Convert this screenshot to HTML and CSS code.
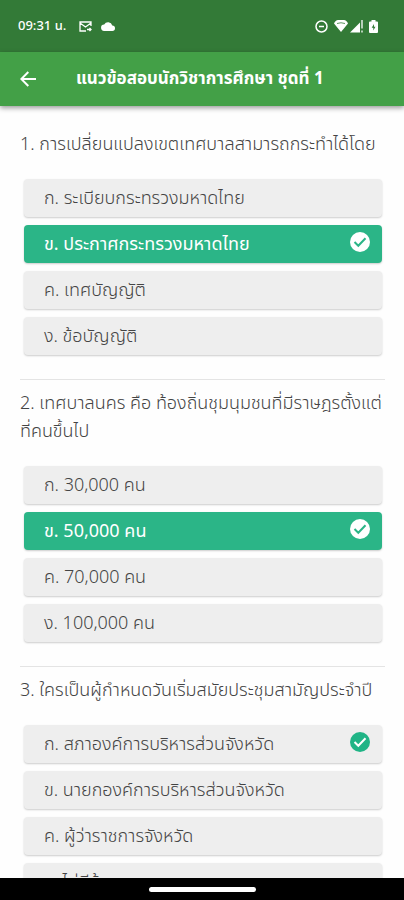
FILE: index.html
```
<!DOCTYPE html>
<html lang="th">
<head>
    <meta charset="utf-8">
    <meta name="viewport" content="width=device-width, initial-scale=1">
    <title>แนวข้อสอบนักวิชาการศึกษา ชุดที่ 1</title>
    <link rel="stylesheet" href="styles.css">
</head>
<body>
    <div class="status-bar">
        <span class="time">09:31 น.</span>
        <svg class="icon-mail" width="13" height="11" viewBox="0 0 13 11">
            <path d="M7 10H1V1h11v4M1 2l5.500 4L12 2M8 8.500h4M10.500 7l1.500 1.500L10.500 10" fill="none" stroke="#fff" stroke-width="1.300"/>
        </svg>
        <svg class="icon-cloud" width="14" height="9" viewBox="0 0 14 9">
            <path d="M11.300 3.500A4.400 4.400 0 0 0 3.200 2.600 3.200 3.200 0 0 0 3.300 9h7.900a2.750 2.750 0 0 0 .1-5.500z" fill="#fff"/>
        </svg>
        <div class="status-right">
            <svg class="icon-dnd" width="13" height="13" viewBox="0 0 13 13">
                <circle cx="6.500" cy="6.500" r="5.500" fill="none" stroke="#fff" stroke-width="1.500"/>
                <path d="M4 6.500h5" stroke="#fff" stroke-width="1.500"/>
            </svg>
            <svg width="14" height="12" viewBox="0 0 14 12">
                <path d="M0 3.500Q1.500 0 4 0h6q2.500 0 4 3.500L7 12z" fill="#fff"/>
                <path d="M3 3.500q4-1.500 8 0" fill="none" stroke="#337a37" stroke-width=".8"/>
            </svg>
            <svg width="13" height="13" viewBox="0 0 13 13">
                <path d="M0 12.500 10 2.500v10z" fill="#fff"/>
                <path d="M12 0v8.500M12 10.500v2" stroke="#fff" stroke-width="1.300"/>
            </svg>
            <svg class="icon-battery" width="9" height="13" viewBox="0 0 9 13">
                <path d="M2.500 0h4v1.500H8q1 0 1 1V12q0 1-1 1H1q-1 0-1-1V2.500q0-1 1-1h1.500z" fill="#fff"/>
                <path d="M5 4 2.700 7.700h1.600V10.500L6.500 6.700H5z" fill="#337a37"/>
            </svg>
        </div>
    </div>

    <header class="app-bar">
        <button type="button" class="back-button" aria-label="ย้อนกลับ">
            <svg width="16" height="16" viewBox="0 0 16 16">
                <path d="M16 8H1.500M8.300 1 1.300 8l7 7" fill="none" stroke="#fff" stroke-width="2"/>
            </svg>
        </button>
        <h1>แนวข้อสอบนักวิชาการศึกษา ชุดที่ 1</h1>
    </header>

    <main class="quiz">
        <section class="question">
            <h2>1. การเปลี่ยนแปลงเขตเทศบาลสามารถกระทำได้โดย</h2>
            <div class="options">
                <button type="button" class="option">ก. ระเบียบกระทรวงมหาดไทย</button>
                <button type="button" class="option selected">ข. ประกาศกระทรวงมหาดไทย
                    <svg class="check" viewBox="0 0 20 20"><circle cx="10" cy="10" r="10"/><path d="m4.500 10 3.800 3.800 7.200-7.500"/></svg>
                </button>
                <button type="button" class="option">ค. เทศบัญญัติ</button>
                <button type="button" class="option">ง. ข้อบัญญัติ</button>
            </div>
        </section>

        <section class="question">
            <h2>2. เทศบาลนคร คือ ท้องถิ่นชุมนุมชนที่มีราษฎรตั้งแต่ ที่คนขึ้นไป</h2>
            <div class="options">
                <button type="button" class="option">ก. 30,000 คน</button>
                <button type="button" class="option selected">ข. 50,000 คน
                    <svg class="check" viewBox="0 0 20 20"><circle cx="10" cy="10" r="10"/><path d="m4.500 10 3.800 3.800 7.200-7.500"/></svg>
                </button>
                <button type="button" class="option">ค. 70,000 คน</button>
                <button type="button" class="option">ง. 100,000 คน</button>
            </div>
        </section>

        <section class="question">
            <h2>3. ใครเป็นผู้กำหนดวันเริ่มสมัยประชุมสามัญประจำปี</h2>
            <div class="options">
                <button type="button" class="option">ก. สภาองค์การบริหารส่วนจังหวัด
                    <svg class="check" viewBox="0 0 20 20"><circle cx="10" cy="10" r="10"/><path d="m4.500 10 3.800 3.800 7.200-7.500"/></svg>
                </button>
                <button type="button" class="option">ข. นายกองค์การบริหารส่วนจังหวัด</button>
                <button type="button" class="option">ค. ผู้ว่าราชการจังหวัด</button>
                <button type="button" class="option">ง. ไม่มีข้อ</button>
            </div>
        </section>
    </main>

    <footer class="nav-bar">
        <div class="nav-handle"></div>
    </footer>
</body>
</html>
```
FILE: styles.css
```
* {
    box-sizing: border-box;
}

body {
    margin: 0;
    height: 100vh;
    display: flex;
    flex-direction: column;
    background-color: #fefefe;
    color: #444;
    font-family: "Noto Sans Thai", "Noto Sans", sans-serif;
    font-size: 18px;
}

.status-bar {
    display: flex;
    flex-shrink: 0;
    align-items: center;
    height: 52px;
    padding: 0 26px 0 18px;
    background-color: #337a37;
    color: #fff;
}

.time {
    font-size: 13px;
    font-weight: 500;
}

.icon-mail {
    margin-left: 13px;
}

.icon-cloud {
    margin-left: 9px;
}

.status-right {
    display: flex;
    align-items: center;
    gap: 2px;
    margin-left: auto;
}

.icon-dnd {
    margin-right: 4px;
}

.icon-battery {
    margin-left: 4px;
}

.app-bar {
    display: flex;
    flex-shrink: 0;
    align-items: center;
    height: 54px;
    padding: 0 20px;
    background-color: #43a047;
    color: #fff;
    box-shadow: 0 2px 5px rgba(0, 0, 0, 0.4);
    z-index: 1;
}

.back-button {
    display: flex;
    width: 56px;
    padding: 0;
    border: none;
    background: none;
    cursor: pointer;
}

.app-bar h1 {
    margin: 0;
    font-size: 17px;
    font-weight: 700;
}

.quiz {
    flex: 1;
    min-height: 0;
    overflow: hidden;
    padding: 15px 19px 0 20px;
}

.question {
    padding: 10px 0 24px;
    border-bottom: 1px solid #e4e4e4;
}

.question h2 {
    margin: 0 0 20px;
    font-size: 18px;
    font-weight: 300;
    line-height: 28px;
}

.options {
    display: flex;
    flex-direction: column;
    gap: 8px;
    padding: 0 3px 0 4px;
}

.option {
    display: flex;
    align-items: center;
    justify-content: space-between;
    height: 38px;
    padding: 0 12px 0 20px;
    border: none;
    border-radius: 4px;
    background-color: #eee;
    color: #444;
    font-family: inherit;
    font-size: 18px;
    font-weight: 300;
    text-align: left;
    box-shadow: 0 1px 2px rgba(0, 0, 0, 0.2);
    cursor: pointer;
}

.option.selected {
    background-color: #2bb587;
    color: #fff;
    font-weight: 400;
}

.check {
    width: 20px;
    height: 20px;
    margin-bottom: 4px;
    fill: #20b486;
    stroke: none;
}

.check path {
    fill: none;
    stroke: #fff;
    stroke-width: 2;
}

.selected .check {
    fill: #fff;
}

.selected .check path {
    stroke: #2bb587;
}

.nav-bar {
    display: flex;
    flex-shrink: 0;
    align-items: center;
    justify-content: center;
    height: 22px;
    background-color: #000;
}

.nav-handle {
    width: 107px;
    height: 5px;
    border-radius: 3px;
    background-color: #fff;
}
```
